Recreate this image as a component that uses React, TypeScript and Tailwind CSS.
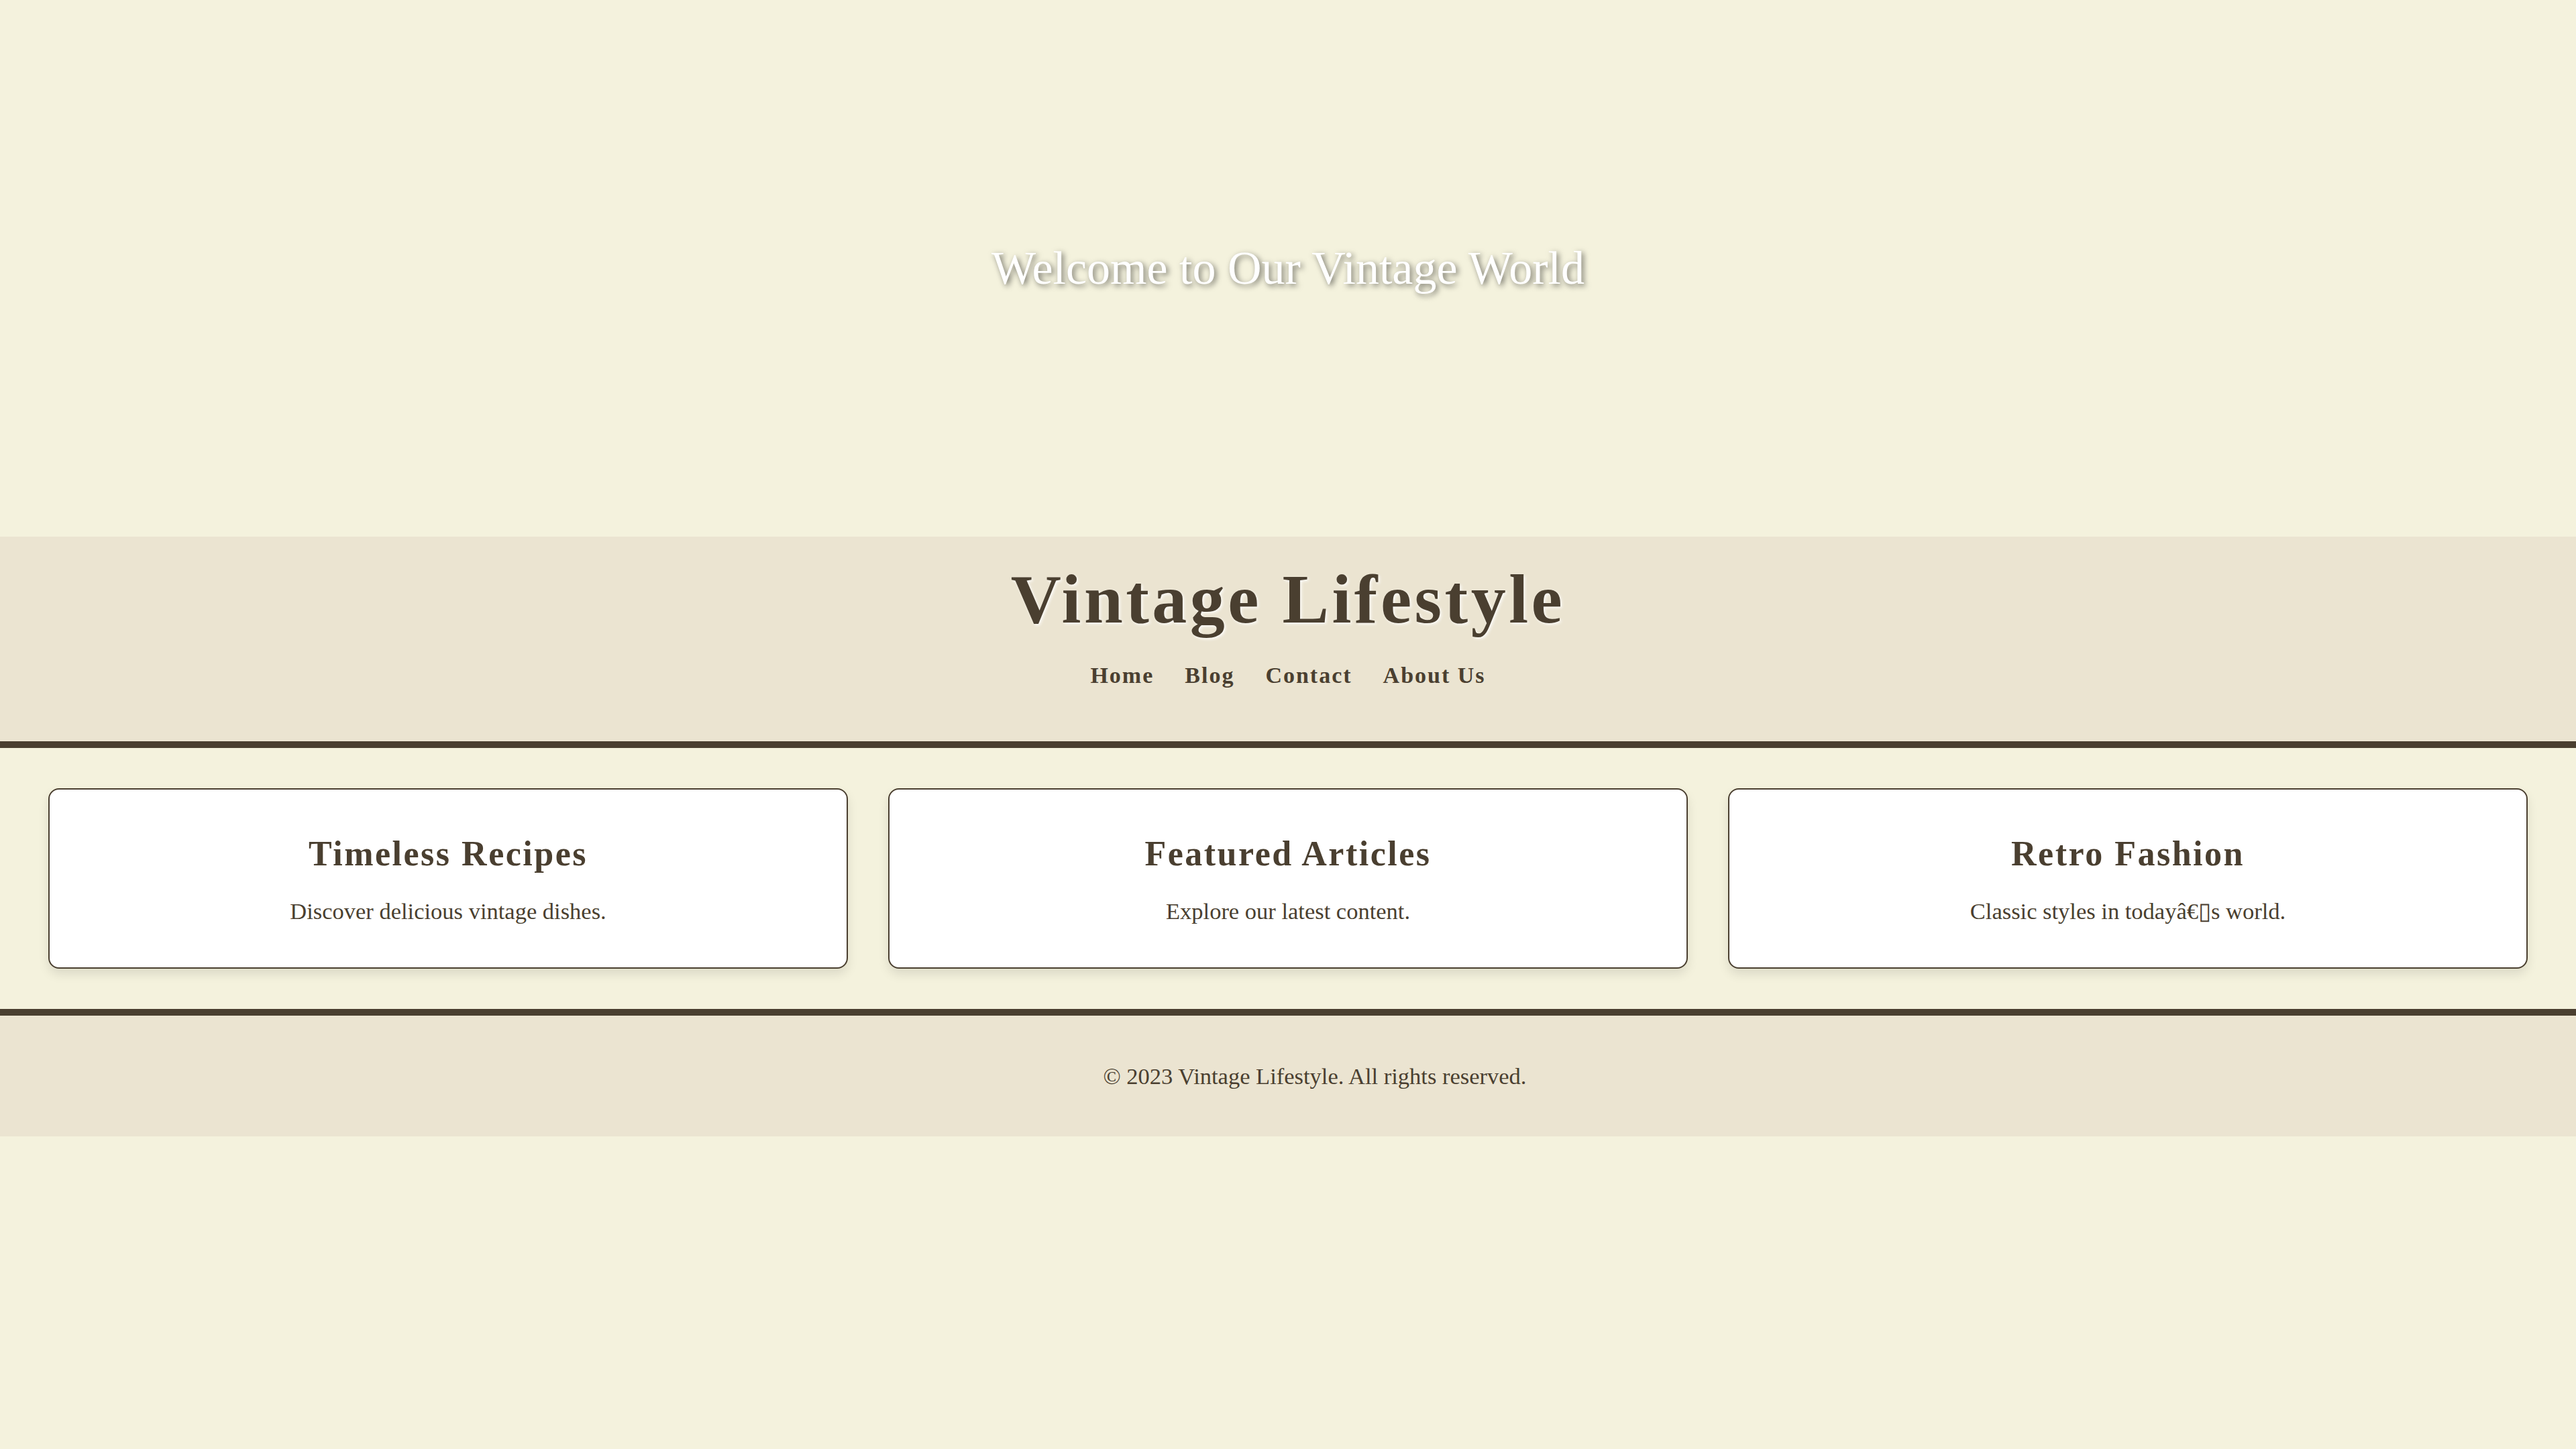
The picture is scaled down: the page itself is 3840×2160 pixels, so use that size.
import React from "react";

const cards = [
  { title: "Timeless Recipes", text: "Discover delicious vintage dishes." },
  { title: "Featured Articles", text: "Explore our latest content." },
  { title: "Retro Fashion", text: "Classic styles in today\u00e2\u20ac\u25afs world." },
];

export default function App() {
  return (
    <div className="min-h-screen bg-[#f4f2dd] text-[#4a3f30] [font-family:'Liberation_Serif',serif]">
      <section className="flex h-[800px] items-center justify-center">
        <h2 className="text-[70px] leading-[80px] font-normal text-white [text-shadow:3px_3px_8px_rgba(0,0,0,0.55)]">
          Welcome to Our Vintage World
        </h2>
      </section>

      <header className="flex flex-col items-center border-b-[10px] border-[#4a3f30] bg-[#ebe4d1] pt-[33px] pb-[78px]">
        <h1 className="text-[104px] leading-[120px] font-bold tracking-[4.5px] [text-shadow:2px_2px_4px_rgba(255,255,255,0.9)]">
          Vintage Lifestyle
        </h1>
        <nav className="mt-[34px] flex gap-[46px] text-[34px] leading-[40px] font-bold tracking-[2px]">
          <a>Home</a>
          <a>Blog</a>
          <a>Contact</a>
          <a>About Us</a>
        </nav>
      </header>

      <main className="grid grid-cols-3 gap-[60px] px-[72px] py-[60px]">
        {cards.map((c) => (
          <div
            key={c.title}
            className="flex flex-col items-center rounded-2xl border-2 border-[#4a3f30] bg-white pt-[66px] pb-[64px] shadow-[0_8px_16px_rgba(0,0,0,0.1)]"
          >
            <h3 className="text-[52px] leading-[60px] font-bold tracking-[2.5px]">{c.title}</h3>
            <p className="mt-[35px] text-[34.5px] leading-[40px]">{c.text}</p>
          </div>
        ))}
      </main>

      <footer className="border-t-[10px] border-[#4a3f30] bg-[#ebe4d1] py-[70px] pl-[80px] text-center">
        <p className="text-[34.5px] leading-[40px]">© 2023 Vintage Lifestyle. All rights reserved.</p>
      </footer>
    </div>
  );
}
